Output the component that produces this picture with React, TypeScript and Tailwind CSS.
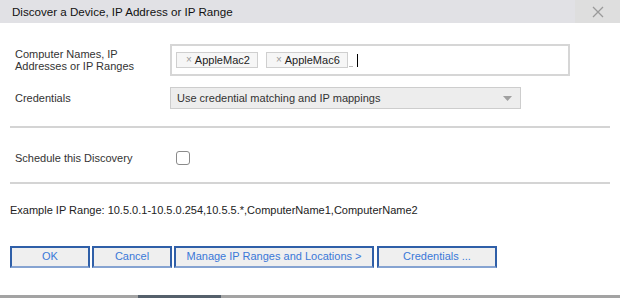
import React from "react";

function Btn({ children, w }: { children: React.ReactNode; w: string }) {
  return (
    <button
      className={`${w} h-[22px] bg-[#efefef] border-2 border-[#2f5fa8] border-b-[#86a3d1] text-[#3a78d8] text-[11px] leading-none flex items-center justify-center`}
    >
      {children}
    </button>
  );
}

function Tag({ label }: { label: string }) {
  return (
    <div className="h-[16px] pl-[9px] pr-[7px] flex items-center gap-[3px] bg-[#f6f6f6] border border-[#cfcfcf] text-[11px] text-[#222] leading-none">
      <span className="text-[#999] text-[10px]">×</span>
      <span>{label}</span>
    </div>
  );
}

export default function App() {
  return (
    <div
      className="w-[620px] h-[298px] bg-white flex flex-col overflow-hidden relative"
      style={{ fontFamily: '"Liberation Sans", Arial, sans-serif' }}
    >
      {/* Title bar */}
      <div className="h-[23px] bg-[#e1e1e5] flex items-center shrink-0">
        <div className="flex-1 pl-[12px] text-[11.6px] text-[#111]">
          Discover a Device, IP Address or IP Range
        </div>
        <div className="w-[45px] h-full bg-[#dedede] flex items-center justify-center">
          <svg width="12" height="12" viewBox="0 0 12 12">
            <path d="M1 1 L11 11 M11 1 L1 11" stroke="#9a9a9a" strokeWidth="1.3" />
          </svg>
        </div>
      </div>

      {/* Form */}
      <div className="flex flex-col pt-[21px] px-[10px]">
        <div className="flex items-center">
          <div className="w-[160px] pl-[5px] text-[11px] leading-[12px] text-[#333]">
            Computer Names, IP
            <br />
            Addresses or IP Ranges
          </div>
          <div className="w-[400px] h-[32px] border-2 border-[#d6d6d6] flex items-center pl-[4px] gap-[8px]">
            <Tag label="AppleMac2" />
            <Tag label="AppleMac6" />
            <div className="flex items-end h-[14px] -ml-[7px] gap-[4px]">
              <div className="w-[4px] h-px bg-[#bbb]" />
              <div className="w-px h-[13px] bg-black" />
            </div>
          </div>
        </div>

        <div className="flex items-center mt-[11px]">
          <div className="w-[160px] pl-[5px] text-[11px] text-[#333]">Credentials</div>
          <div className="w-[351px] h-[22px] bg-[#ededed] border border-[#cdcdcd] flex items-center pl-[6px] pr-[8px] text-[11px] text-[#333]">
            <span className="flex-1">Use credential matching and IP mappings</span>
            <svg width="9" height="5" viewBox="0 0 9 5">
              <path d="M0 0 L9 0 L4.5 5 Z" fill="#a0a0a0" />
            </svg>
          </div>
        </div>

        <div className="mt-[17px] h-[2px] bg-[#d4d4d4] w-[600px]" />

        <div className="flex items-center mt-[22px]">
          <div className="w-[166px] pl-[5px] text-[11px] text-[#333]">Schedule this Discovery</div>
          <div className="w-[14px] h-[14px] border-[1.5px] border-[#8a8a8a] rounded-[3px]" />
        </div>

        <div className="mt-[15px] h-[2px] bg-[#d4d4d4] w-[600px]" />

        <div className="mt-[20px] text-[11px] leading-[13px] text-[#222]">
          Example IP Range: 10.5.0.1-10.5.0.254,10.5.5.*,ComputerName1,ComputerName2
        </div>

        <div className="flex mt-[29px] gap-[2px]">
          <Btn w="w-[80px]">OK</Btn>
          <Btn w="w-[80px]">Cancel</Btn>
          <Btn w="w-[200px]">Manage IP Ranges and Locations &gt;</Btn>
          <Btn w="w-[120px] ml-[1px]">Credentials ...</Btn>
        </div>
      </div>

      {/* bottom strip */}
      <div className="absolute bottom-0 left-0 w-full h-[3px] bg-[#a3a3a3] flex">
        <div className="w-[138px]" />
        <div className="w-[83px] bg-[#55606b]" />
      </div>
    </div>
  );
}
